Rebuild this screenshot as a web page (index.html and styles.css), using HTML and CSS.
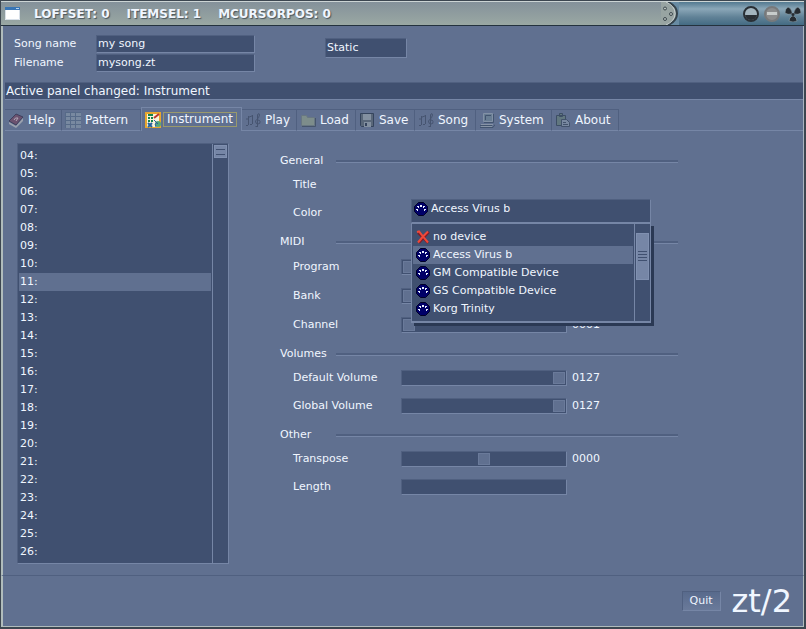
FILE: index.html
```html
<!DOCTYPE html>
<html lang="en">
<head>
<meta charset="utf-8">
<title>zt/2</title>
<link rel="stylesheet" href="styles.css">
</head>
<body>
<svg class="defs" aria-hidden="true">
  <symbol id="midi" viewBox="0 0 14 14">
    <path fill="#000068" stroke="#000028" d="M4.500.5h5l4 4v5l-4 4h-5l-4-4v-5z"/>
    <path fill="#e8f0ff" d="M6 3h2v2H6zM3 4h2v1H3zM9 4h2v1H9zM4 5h1v1H4zM9 5h1v1H9zM2 7h2v1H2zM10 7h2v1h-2zM3 8h1v1H3zM10 8h1v1h-1z"/>
  </symbol>
  <symbol id="cross" viewBox="0 0 14 14">
    <path fill="none" stroke="#801c28" stroke-width="2" d="M2 3l10 10M13 2L3 13"/>
    <path fill="none" stroke="#f04838" stroke-width="2" d="M1 2l2-.5 4 5 5 6M12 1.500L7 6.500l-5 6"/>
  </symbol>
  <symbol id="notes" viewBox="0 0 16 16">
    <path fill="none" stroke="#465470" d="M3.500 4v9M7.500 3v9M3 5.500l5-2M1 13.500h2M5 12.500h2M1 7h2M12.500 15V2.500q2-2 2 .5t-4 6q0 3 2.500 3t2-2.500-3-1M10.500 14.500h2"/>
  </symbol>
</svg>
<div class="window">
  <header class="titlebar">
    <svg class="app-icon" viewBox="0 0 15 13"><path fill="#fff" d="M0 0h15v13H0z"/><path fill="#3875b5" d="M0 0h15v3H0z"/><path fill="#b8d4f0" d="M11 1h3v1h-3z"/><path fill="none" stroke="#d8e0e8" d="M.5 3v9.500h14V3"/></svg>
    <h1 class="stats"><span>LOFFSET: 0</span><span>ITEMSEL: 1</span><span>MCURSORPOS: 0</span></h1>
    <svg class="rivets" viewBox="0 0 18 23"><path fill="#98a4a2" d="M0 0h7q9 4 9 11.500T7 23H0z"/><path fill="none" stroke="#35434c" stroke-width="2" d="M7 0q9 4 9 11.500T7 23"/><path fill="none" stroke="#c4cccc" d="M5 0q9 4 9 11.500T5 23"/><g fill="#b8c0bc" stroke="#3e4a50"><circle cx="4" cy="6.500" r="1.500"/><circle cx="10" cy="12" r="1.500"/><circle cx="4" cy="17" r="1.500"/></g></svg>
    <div class="controls">
      <button type="button" aria-label="Minimize"><svg viewBox="0 0 16 16"><circle cx="8" cy="8" r="7" fill="#a3b5bf" stroke="#292f35" stroke-width="2"/><path fill="#292f35" d="M2 9h12q-1 5-6 5t-6-5z"/></svg></button>
      <button type="button" aria-label="Maximize"><svg viewBox="0 0 16 16"><circle cx="8" cy="8" r="7" fill="#8b8c8d" stroke="#77797b" stroke-width="2"/><path fill="#c8cccb" d="M3 6h10v3H3z"/></svg></button>
      <button type="button" aria-label="Close"><svg viewBox="0 0 16 16"><path fill="#252b31" stroke="#9baeb9" stroke-width=".5" d="M0 7q0-4 3-6 3 1 4 5v2q-4 1-7-1zM16 7q0-4-3-6-3 1-4 5v2q4 1 7-1zM4 15q0-3 3-5h2q3 2 3 5-4 2-8 0z"/><circle cx="8" cy="8.500" r="1.500" fill="#252b31"/></svg></button>
    </div>
  </header>

  <main>
    <div class="song">
      <div class="names">
        <label for="song">Song name</label><input id="song" type="text" value="my song">
        <label for="file">Filename</label><input id="file" type="text" value="mysong.zt">
      </div>
      <input class="static" type="text" aria-label="Status" value="Static">
    </div>
    <p class="status">Active panel changed: Instrument</p>

    <nav class="tabs">
      <button type="button"><svg viewBox="0 0 16 16"><path fill="#6b526f" stroke="#3f3f5d" d="M1 9l7-7 7 3-7 8z"/><path fill="#9ba1ae" d="M1 10l7 4 7-8v3l-7 7-7-4z"/><path fill="none" stroke="#b2a7b7" d="M6 8q1-3 4-2l-2 3"/></svg>Help</button>
      <button type="button"><svg viewBox="0 0 16 16"><path fill="#7889a0" d="M0 0h16v16H0z"/><path fill="none" stroke="#566a88" d="M0 .5h16M0 4.500h16M0 8.500h16M0 12.500h16M.5 0v16M5.500 0v16M10.500 0v16"/></svg>Pattern</button>
      <button type="button" class="active"><svg viewBox="0 0 16 16"><path fill="#e8a62e" d="M0 0h16v16H0z"/><path fill="#f8f4dc" d="M2 2h12v13H2z"/><path fill="#16834d" d="M3 2h5v2H3zM3 5h2v2H3zM6 5h2v2H6zM3 8h2v2H3zM6 8h2v2H6z"/><path fill="none" stroke="#22609d" stroke-width="2" d="M3 11l4 4M7 11l-4 4"/><path fill="none" stroke="#be342e" stroke-width="2" d="M9 6l5-4"/><circle cx="13" cy="12" r="3" fill="#54a878"/><path fill="none" stroke="#285ba0" d="M9 8l4 4M11 15q-2-3 1-5"/></svg><span>Instrument</span></button>
      <button type="button"><svg viewBox="0 0 16 16"><use href="#notes"/></svg>Play</button>
      <button type="button"><svg viewBox="0 0 16 16"><path fill="#7d8d8b" stroke="#687782" d="M1.500 3.500h5l1 2h7v8h-13z"/><path fill="none" stroke="#46556c" d="M2 14.500h13.500V6"/></svg>Load</button>
      <button type="button"><svg viewBox="0 0 16 16"><path fill="#596779" stroke="#35445d" d="M1.500 1.500h13v13h-12l-1-1z"/><path fill="#8390a0" d="M4 2h8v6H4zM5 10h7v5H5z"/><path fill="#35445d" d="M6 11h2v3H6z"/></svg>Save</button>
      <button type="button"><svg viewBox="0 0 16 16"><use href="#notes"/></svg>Song</button>
      <button type="button"><svg viewBox="0 0 16 16"><path fill="#687d93" stroke="#8291a6" d="M4.500 1.500h9v8h-9z"/><path fill="none" stroke="#42546f" d="M6.500 8V3.500H12M5 10.500h9.500V2M1 13.500h12M1 15.500h13l2-3"/><path fill="none" stroke="#8794a6" d="M2 12.500h12M2 14.500h11"/></svg>System</button>
      <button type="button"><svg viewBox="0 0 16 16"><path fill="#61777f" stroke="#3d4e65" d="M1.500 3.500h9v10h-9zM4.500 1.500h3v3h-3z"/><path fill="#7888a0" stroke="#42526b" d="M6.500 7.500h5l3 3v4h-8z"/><path stroke="#42526b" d="M8 10.500h3M8 12.500h5"/></svg>About</button>
      <i class="rest"></i>
    </nav>

    <section class="panel">
      <div class="list">
        <ul role="listbox" aria-label="Instruments">
          <li role="option">04:</li><li role="option">05:</li><li role="option">06:</li><li role="option">07:</li><li role="option">08:</li><li role="option">09:</li><li role="option">10:</li><li role="option" aria-selected="true">11:</li><li role="option">12:</li><li role="option">13:</li><li role="option">14:</li><li role="option">15:</li><li role="option">16:</li><li role="option">17:</li><li role="option">18:</li><li role="option">19:</li><li role="option">20:</li><li role="option">21:</li><li role="option">22:</li><li role="option">23:</li><li role="option">24:</li><li role="option">25:</li><li role="option">26:</li>
        </ul>
        <div class="scroll"><div class="grip"></div></div>
      </div>

      <form class="settings">
        <fieldset>
          <h2>General</h2>
          <div class="row"><span class="name">Title</span></div>
          <div class="row"><label class="name" for="device">Color</label>
            <div class="combo">
              <svg class="device-icon"><use href="#midi"/></svg>
              <select id="device"><option>Access Virus b</option></select>
              <div class="popup">
                <ul role="listbox" aria-label="Devices">
                  <li role="option"><svg><use href="#cross"/></svg>no device</li>
                  <li role="option" aria-selected="true"><svg><use href="#midi"/></svg>Access Virus b</li>
                  <li role="option"><svg><use href="#midi"/></svg>GM Compatible Device</li>
                  <li role="option"><svg><use href="#midi"/></svg>GS Compatible Device</li>
                  <li role="option"><svg><use href="#midi"/></svg>Korg Trinity</li>
                </ul>
                <div class="scroll"><div class="grip tall"></div></div>
              </div>
            </div>
          </div>
        </fieldset>
        <fieldset class="midi">
          <h2>MIDI</h2>
          <div class="row"><label class="name" for="program">Program</label><input id="program" type="range" min="0" max="127" value="0"></div>
          <div class="row"><label class="name" for="bank">Bank</label><input id="bank" type="range" min="0" max="127" value="0"></div>
          <div class="row"><label class="name" for="channel">Channel</label><input id="channel" type="range" min="1" max="16" value="1"><output for="channel">0001</output></div>
        </fieldset>
        <fieldset>
          <h2>Volumes</h2>
          <div class="row"><label class="name" for="defvol">Default Volume</label><input id="defvol" type="range" min="0" max="127" value="127"><output for="defvol">0127</output></div>
          <div class="row"><label class="name" for="globvol">Global Volume</label><input id="globvol" type="range" min="0" max="127" value="127"><output for="globvol">0127</output></div>
        </fieldset>
        <fieldset>
          <h2>Other</h2>
          <div class="row"><label class="name" for="transpose">Transpose</label><input id="transpose" type="range" min="-127" max="127" value="0"><output for="transpose">0000</output></div>
          <div class="row"><label class="name" for="length">Length</label><input id="length" class="length" type="text"></div>
        </fieldset>
      </form>
    </section>
  </main>

  <footer>
    <button type="button" class="quit">Quit</button>
    <strong class="logo">zt/2</strong>
  </footer>
</div>
</body>
</html>
```
FILE: styles.css
```css
:root {
  --bg: #607090;
  --well: #405070;
  --light: #7686a6;
  --dark: #506080;
  --text: #f0f6ff;
}

* { box-sizing: border-box; }

body {
  margin: 0;
  background: #3c4650;
  color: var(--text);
  font: 11px/18px "DejaVu Sans", sans-serif;
}

button, input, select { font: inherit; color: inherit; }
ul { list-style: none; margin: 0; padding: 0; }
.defs { position: absolute; width: 0; height: 0; }

.window {
  display: flex;
  flex-direction: column;
  min-height: 100vh;
  border: solid #3c4650;
  border-width: 1px 2px 2px 1px;
}

/* Title bar */
.titlebar {
  display: flex;
  align-items: center;
  height: 25px;
  padding-left: 4px;
  background: linear-gradient(#84919a, #9aa8a3);
  border-top: 1px solid #ccd4d4;
  border-bottom: 1px solid #24323e;
}
.app-icon { width: 15px; height: 13px; }
.stats {
  display: flex;
  flex: 1;
  gap: 17px;
  margin: 0;
  padding-left: 14px;
  font-size: 12px;
  font-weight: bold;
  text-shadow: 1px 1px 1px #48545c;
}
.rivets { width: 18px; height: 23px; background: #688ba3; }
.controls {
  display: flex;
  align-items: center;
  justify-content: flex-end;
  gap: 5px;
  width: 125px;
  height: 23px;
  padding-right: 3px;
  background: linear-gradient(#537990, #8ba7b8 30%, #618297 65%, #446b83);
}
.controls button { width: 16px; height: 16px; padding: 0; border: 0; background: none; }
.controls svg { display: block; }

main {
  flex: 1;
  background: var(--bg);
  border-left: 2px solid #b0bcbc;
  border-right: 1px solid #a8b4c0;
  padding: 9px 0 11px 2px;
}

/* Song fields */
.song { display: flex; align-items: flex-start; gap: 70px; padding-left: 9px; }
.names { display: grid; grid-template-columns: 82px 159px; row-gap: 1px; }
input[type="text"] {
  height: 18px;
  min-width: 0;
  padding: 0 1px 1px;
  background: var(--well);
  border: 1px solid var(--dark);
  border-right-color: var(--light);
  border-bottom-color: var(--light);
  border-radius: 0;
  outline: 0;
}
.song .static { width: 82px; height: 20px; margin-top: 3px; }

.status {
  height: 18px;
  margin: 10px 0 7px;
  padding-left: 1px;
  background: var(--well);
  border-top: 1px solid var(--dark);
  border-bottom: 1px solid var(--light);
  font-size: 12px;
  line-height: 16px;
}

/* Tabs */
.tabs {
  display: grid;
  grid-template-columns: 57px 79px 101px 55px 59px 59px 61px 76px 67px 1fr;
  align-items: end;
  height: 24px;
  font-size: 12px;
}
.tabs button {
  display: flex;
  align-items: center;
  gap: 4px;
  height: 22px;
  padding: 0 0 0 3px;
  background: none;
  border: 1px solid var(--dark);
  border-left-width: 0;
  border-bottom-color: var(--light);
  white-space: nowrap;
}
.tabs svg { flex: none; width: 16px; height: 16px; }
.tabs button.active {
  gap: 3px;
  height: 24px;
  padding: 0 5px 0 3px;
  border: solid var(--light);
  border-width: 1px 1px 0;
}
.active span { flex: 1; height: 13px; outline: 1px solid #99996c; line-height: 13px; }
.rest { height: 1px; background: var(--light); }

/* Instrument list */
.panel { display: flex; gap: 51px; padding: 12px 125px 0 12px; }
.list {
  display: flex;
  width: 212px;
  background: var(--well);
  border: 1px solid var(--dark);
  border-right-color: var(--light);
  border-bottom-color: var(--light);
}
.list ul { flex: 1; padding: 3px 1px 2px; }
.list li { padding-left: 1px; }
li[aria-selected="true"] { background: var(--bg); }
.scroll { width: 16px; padding: 1px; border-left: 1px solid var(--light); }
.grip {
  display: flex;
  height: 13px;
  background: var(--light);
  border: 1px solid #8090b0;
}
.grip::before {
  content: "";
  width: 9px;
  height: 4px;
  margin: auto;
  border: solid var(--well);
  border-width: 1px 0;
}
.grip.tall { height: 47px; margin-top: 8px; }
.grip.tall::before {
  height: 11px;
  border: 0;
  background: repeating-linear-gradient(var(--well) 0 1px, transparent 1px 3px);
}

/* Settings */
.settings { flex: 1; display: flex; flex-direction: column; gap: 5px; padding-top: 8px; }
fieldset { min-width: 0; margin: 0; padding: 0; border: 0; }
h2 {
  display: grid;
  grid-template-columns: 56px 1fr;
  align-items: center;
  height: 20px;
  margin: 0;
  font-size: 11px;
  font-weight: normal;
}
h2::after { content: ""; height: 2px; background: var(--dark); border-bottom: 1px solid var(--light); }
.row { display: flex; align-items: center; height: 28px; padding-left: 13px; }
.midi .row { height: 29px; }
.name { width: 108px; white-space: nowrap; }
output { padding-left: 5px; }

input[type="range"] {
  appearance: none;
  width: 166px;
  height: 16px;
  margin: 0;
  padding: 0 1px;
  background: var(--well);
  border: 1px solid var(--dark);
  border-right-color: var(--light);
  border-bottom-color: var(--light);
}
input[type="range"]::-webkit-slider-thumb {
  appearance: none;
  width: 12px;
  height: 12px;
  background: var(--bg);
  border: 1px solid #6a7a9a;
}
.row .length { width: 166px; height: 16px; }

/* Device selector */
.combo { position: relative; align-self: flex-start; width: 240px; margin-left: 10px; }
.combo select {
  appearance: none;
  display: block;
  width: 100%;
  height: 24px;
  padding: 0 0 4px 19px;
  background: var(--well);
  border: 1px solid var(--dark);
  border-right-color: var(--light);
  border-bottom-color: var(--light);
  border-radius: 0;
}
.device-icon { position: absolute; left: 3px; top: 3px; width: 14px; height: 14px; }
.popup {
  position: absolute;
  z-index: 1;
  top: 24px;
  left: 0;
  display: flex;
  width: 240px;
  background: var(--well);
  border: 1px solid var(--light);
  border-bottom-width: 2px;
  box-shadow: 3px 3px 0 #2b3954;
}
.popup ul { flex: 1; padding: 4px 1px 3px; }
.popup li { display: flex; align-items: center; gap: 3px; padding-left: 3px; }
.popup li svg { width: 14px; height: 14px; }

/* Footer */
footer {
  display: flex;
  align-items: center;
  justify-content: flex-end;
  gap: 11px;
  height: 52px;
  padding-right: 11px;
  background: var(--bg);
  border: solid #b0bcbc;
  border-width: 1px 1px 1px 2px;
  border-top-color: var(--dark);
}
.quit {
  width: 39px;
  height: 20px;
  padding: 0;
  background: linear-gradient(#586a8c, #6a7a9a);
  border: 1px solid var(--dark);
  border-right-color: var(--light);
  border-bottom-color: var(--light);
}
.logo { font: 32px/40px "DejaVu Sans", sans-serif; }
```
